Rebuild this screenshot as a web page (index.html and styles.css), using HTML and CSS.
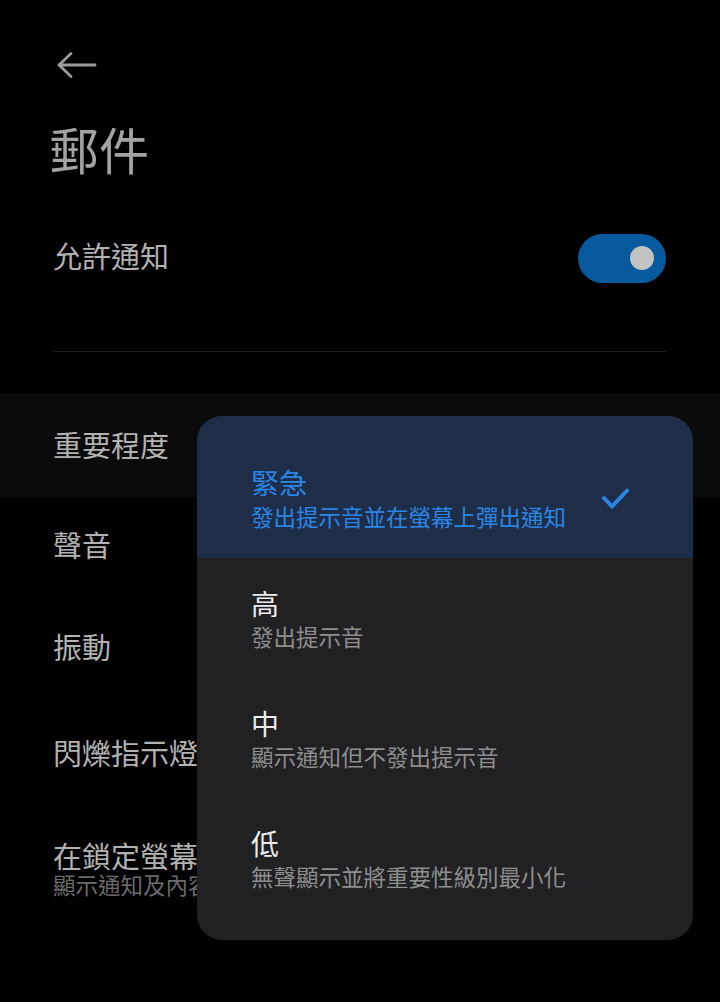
FILE: index.html
```html
<!DOCTYPE html>
<html lang="zh-Hant">
<head>
<meta charset="utf-8">
<title>郵件</title>
<link rel="stylesheet" href="styles.css">
</head>
<body>
<div class="screen">
  <div class="topbar">
    <svg class="back" width="42" height="30" viewBox="0 0 42 30">
      <path d="M3 13 H39 M15 1.5 L3 13 L15 24.5" fill="none" stroke="#9c9c9c" stroke-width="2.8" stroke-linecap="round" stroke-linejoin="round"/>
    </svg>
  </div>
  <h1 class="title">郵件</h1>
  <div class="switch-row">
    <span class="label">允許通知</span>
    <span class="toggle"><span class="knob"></span></span>
  </div>
  <div class="divider"></div>
  <div class="list">
    <div class="row row-active"><span class="label">重要程度</span></div>
    <div class="row row-sound"><span class="label">聲音</span></div>
    <div class="row row-vibrate"><span class="label">振動</span></div>
    <div class="row row-light"><span class="label">閃爍指示燈</span></div>
    <div class="row row-two">
      <span class="label">在鎖定螢幕上</span>
      <span class="sub">顯示通知及內容</span>
    </div>
  </div>

  <div class="popup">
    <div class="option option-selected">
      <div class="option-text">
        <span class="option-title">緊急</span>
        <span class="option-sub">發出提示音並在螢幕上彈出通知</span>
      </div>
      <svg class="check" width="30" height="24" viewBox="0 0 30 24">
        <path d="M3 11 L11 19.5 L26 3.5" fill="none" stroke="#2a86e6" stroke-width="4" stroke-linecap="round" stroke-linejoin="round"/>
      </svg>
    </div>
    <div class="option">
      <div class="option-text">
        <span class="option-title">高</span>
        <span class="option-sub">發出提示音</span>
      </div>
    </div>
    <div class="option">
      <div class="option-text">
        <span class="option-title">中</span>
        <span class="option-sub">顯示通知但不發出提示音</span>
      </div>
    </div>
    <div class="option">
      <div class="option-text">
        <span class="option-title">低</span>
        <span class="option-sub">無聲顯示並將重要性級別最小化</span>
      </div>
    </div>
  </div>
</div>
</body>
</html>
```

FILE: styles.css
```css
html, body {
  margin: 0;
  padding: 0;
  background: #000;
}

body {
  font-family: "Noto Sans CJK TC", "Noto Sans CJK SC", "Noto Sans", sans-serif;
  width: 720px;
  height: 1002px;
  overflow: hidden;
}

.screen {
  position: relative;
  width: 720px;
  height: 1002px;
  background: #000;
}

.topbar {
  height: 108px;
  padding-left: 56px;
  box-sizing: border-box;
  padding-top: 52px;
}

.back {
  display: block;
}

.title {
  margin: 0;
  padding-left: 49px;
  height: 80px;
  line-height: 80px;
  font-size: 50px;
  font-weight: 400;
  color: #a3a3a3;
}

.switch-row {
  margin-top: 20px;
  height: 100px;
  display: flex;
  align-items: center;
  justify-content: space-between;
  padding: 0 54px 0 53px;
}

.switch-row .label {
  position: relative;
  top: -3px;
}

.label {
  font-size: 29px;
  line-height: 34px;
  color: #b2b2b2;
  white-space: nowrap;
}

.toggle {
  width: 88px;
  height: 49px;
  border-radius: 25px;
  background: #075a9e;
  display: flex;
  align-items: center;
  justify-content: flex-end;
  padding-right: 12px;
  box-sizing: border-box;
}

.knob {
  width: 24px;
  height: 24px;
  border-radius: 50%;
  background: #c3c3c3;
}

.divider {
  margin: 43px 54px 0 53px;
  height: 1px;
  background: #1c1c1c;
}

.list {
  margin-top: 41px;
  display: flex;
  flex-direction: column;
}

.row {
  height: 102px;
  display: flex;
  flex-direction: column;
  justify-content: center;
  padding-left: 53px;
}

.row-active {
  height: 104px;
  padding-bottom: 2px;
  box-sizing: border-box;
  background: #0b0b0b;
}

.row-sound {
  height: 93px;
}

.row-vibrate {
  height: 111px;
}

.row-light {
  height: 101px;
}

.row-two {
  height: 132px;
  padding-top: 2px;
  box-sizing: border-box;
}

.row-two .label {
  line-height: 30px;
}

.sub {
  font-size: 22.5px;
  line-height: 28px;
  color: #6b6b6b;
  white-space: nowrap;
}

.popup {
  position: absolute;
  left: 197px;
  top: 416px;
  width: 496px;
  height: 524px;
  border-radius: 25px;
  background: #212123;
  overflow: hidden;
  display: flex;
  flex-direction: column;
}

.option {
  height: 120px;
  flex: none;
  display: flex;
  align-items: center;
  justify-content: space-between;
  padding: 0 62px 0 54px;
}

.option-selected {
  height: 142px;
  padding-top: 22px;
  box-sizing: border-box;
  background: #1f2e48;
}

.option-text {
  display: flex;
  flex-direction: column;
}

.option-title {
  font-size: 28px;
  line-height: 34px;
  color: #ececec;
}

.option-sub {
  margin-top: 1px;
  font-size: 22.5px;
  line-height: 30px;
  color: #8e8e8e;
  white-space: nowrap;
}

.option-selected .option-title {
  position: relative;
  top: -1px;
}

.option-selected .option-title,
.option-selected .option-sub {
  color: #2a86e6;
}

.check {
  display: block;
  margin-top: 2px;
}
```
